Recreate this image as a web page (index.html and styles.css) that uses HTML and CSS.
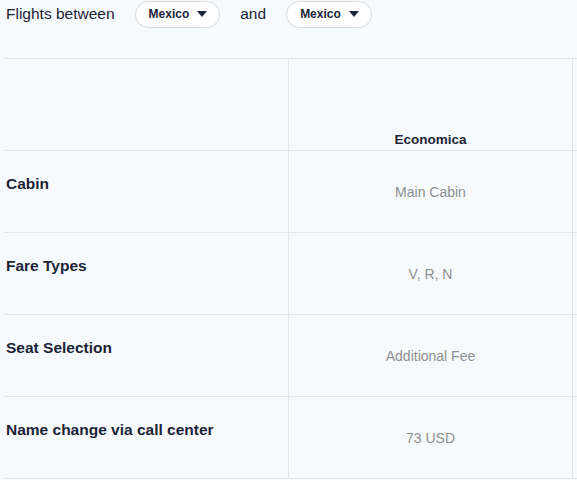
FILE: index.html
```html
<!DOCTYPE html>
<html lang="en">
<head>
    <meta charset="UTF-8">
    <meta name="viewport" content="width=device-width, initial-scale=1.0">
    <title>Fare Comparison</title>
    <link rel="stylesheet" href="styles.css">
</head>
<body>
    <header class="route-bar">
        <span class="route-label">Flights between</span>
        <button class="pill">Mexico <span class="caret"></span></button>
        <span class="route-label">and</span>
        <button class="pill">Mexico <span class="caret"></span></button>
    </header>
    <main class="table-wrap">
        <table class="fare-table">
            <thead>
                <tr>
                    <th class="label-col"></th>
                    <th class="fare-head">Economica</th>
                    <th class="fare-head"></th>
                </tr>
            </thead>
            <tbody>
                <tr>
                    <td class="row-label">Cabin</td>
                    <td class="row-value">Main Cabin</td>
                    <td class="row-value"></td>
                </tr>
                <tr>
                    <td class="row-label">Fare Types</td>
                    <td class="row-value">V, R, N</td>
                    <td class="row-value"></td>
                </tr>
                <tr>
                    <td class="row-label">Seat Selection</td>
                    <td class="row-value">Additional Fee</td>
                    <td class="row-value"></td>
                </tr>
                <tr>
                    <td class="row-label">Name change via call center</td>
                    <td class="row-value">73 USD</td>
                    <td class="row-value"></td>
                </tr>
            </tbody>
        </table>
    </main>
</body>
</html>
```

FILE: styles.css
```css
body {
    margin: 0;
    background: #f7fafd;
    font-family: "Liberation Sans", Arial, sans-serif;
    color: #1b2337;
}

.route-bar {
    display: flex;
    align-items: center;
    gap: 20px;
    height: 28px;
    padding-left: 6px;
}

.route-label {
    font-size: 15.5px;
    color: #1b2337;
}

.pill {
    display: flex;
    align-items: center;
    gap: 8px;
    height: 27px;
    padding: 0 12px 0 13px;
    background: #fff;
    border: 1px solid #d6d8dc;
    border-radius: 14px;
    font-family: inherit;
    font-size: 12px;
    font-weight: bold;
    color: #1b2337;
}

.caret {
    width: 0;
    height: 0;
    border-left: 5px solid transparent;
    border-right: 5px solid transparent;
    border-top: 6px solid #1b2337;
}

.table-wrap {
    margin-top: 30px;
    padding-left: 5px;
    overflow: hidden;
}

.fare-table {
    border-collapse: collapse;
    table-layout: fixed;
    width: 849px;
}

.fare-table th,
.fare-table td {
    width: 283px;
    border-top: 1px solid #e3e4e6;
    padding: 0;
}

.fare-head,
.row-value {
    border-left: 1px solid #e3e4e6;
}

.fare-head {
    height: 88px;
    vertical-align: bottom;
    font-size: 13.5px;
    font-weight: bold;
    text-align: center;
}

.fare-table .fare-head {
    padding-bottom: 3px;
}

.fare-table tbody tr {
    height: 82px;
}

.fare-table .row-label {
    vertical-align: top;
    padding: 24px 0 0 1px;
    font-size: 15.5px;
    font-weight: bold;
}

.row-value {
    text-align: center;
    vertical-align: middle;
    font-size: 14px;
    color: #8f8f8f;
}

.fare-table tbody tr:last-child td {
    border-bottom: 1px solid #e3e4e6;
}
```
